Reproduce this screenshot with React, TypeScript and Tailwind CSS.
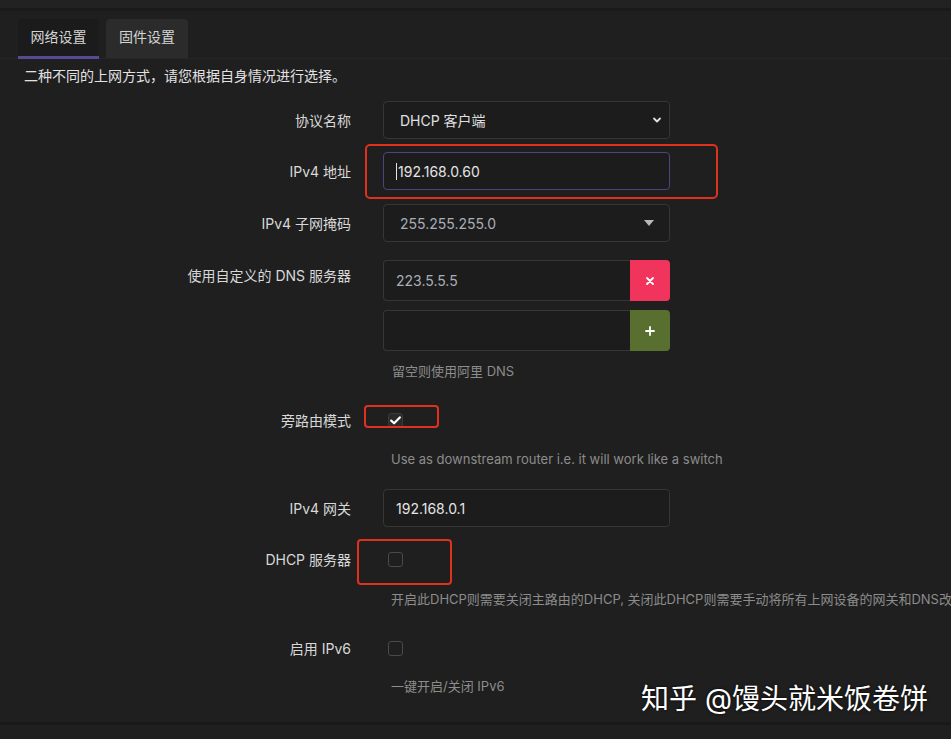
import React from "react";

const font = { fontFamily: '"Inter", "Noto Sans CJK SC", "Noto Sans", sans-serif' };

function Label({ children, className = "" }: { children: React.ReactNode; className?: string }) {
  return (
    <div className={"w-[351px] shrink-0 text-right text-[14px] text-[#d8d8d8] " + className}>{children}</div>
  );
}

function Checkbox({ checked }: { checked?: boolean }) {
  return (
    <div
      className={
        "w-[15px] h-[15px] rounded-[3px] border flex items-center justify-center " +
        (checked ? "border-[#3a3a3a] bg-[#2a2a2a]" : "border-[#4a4a4a] bg-transparent")
      }
    >
      {checked && (
        <svg width="11" height="9" viewBox="0 0 11 9">
          <path d="M1.2 4.6 L4.1 7.3 L9.8 1.4" stroke="#fff" strokeWidth="2.2" fill="none" strokeLinecap="round" strokeLinejoin="round" />
        </svg>
      )}
    </div>
  );
}

function Help({ children, className = "" }: { children: React.ReactNode; className?: string }) {
  return (
    <div className={"flex " + className}>
      <div className="w-[351px] shrink-0" />
      <div className="pl-[40px] text-[13px] text-[#8c8c8c] whitespace-nowrap">{children}</div>
    </div>
  );
}

export default function App() {
  return (
    <div style={font} className="relative w-[951px] h-[739px] overflow-hidden bg-[#1f1f1f]">
      {/* top strip */}
      <div className="h-[8px] bg-[#222222]" />
      <div className="h-[3px] bg-[#1a1a1a]" />
      {/* tabs */}
      <div className="flex gap-[7px] pl-[18px] pt-[8px] border-b border-[#262626]">
        <div className="relative w-[81px] h-[39px] pb-[4px] rounded-t-[4px] bg-[#1b1b1b] flex items-center justify-center text-[14px] text-[#d4d4d4]">
          网络设置
          <div className="absolute left-0 right-0 bottom-[-1px] h-[3px] bg-[#574a92]" />
        </div>
        <div className="w-[82px] h-[39px] pb-[4px] rounded-t-[4px] bg-[#2b2b2b] flex items-center justify-center text-[14px] text-[#d4d4d4]">
          固件设置
        </div>
      </div>
      <div className="pl-[24px] pt-[6px] text-[14px] text-[#e2e2e2]">二种不同的上网方式，请您根据自身情况进行选择。</div>

      {/* form */}
      <div className="flex flex-col mt-[15px]">
        {/* 协议名称 */}
        <div className="flex items-center">
          <Label>协议名称</Label>
          <div className="ml-[32px] w-[287px] h-[38px] rounded-[4px] border border-[#363636] bg-[#1c1c1c] flex items-center justify-between pl-[16px] pr-[6px] text-[14px] text-[#e0e0e0]">
            <span>DHCP 客户端</span>
            <svg width="12" height="12" viewBox="0 0 12 12">
              <path d="M3 4.5 L6 7.5 L9 4.5" stroke="#e0e0e0" strokeWidth="1.8" fill="none" strokeLinecap="round" strokeLinejoin="round" />
            </svg>
          </div>
        </div>

        {/* IPv4 地址 */}
        <div className="flex items-center mt-[13px]">
          <Label>IPv4 地址</Label>
          <div className="relative ml-[32px] w-[287px] h-[38px] rounded-[4px] border border-[#4a4680] bg-[#1c1c1c] flex items-center pl-[12px] text-[14px] text-[#e4e4e4]">
            <span className="w-[1px] h-[17px] bg-[#e4e4e4] mr-[1px]" />
            192.168.0.60
            <div className="absolute left-[-19px] top-[-9px] w-[353px] h-[55px] rounded-[5px] border-[2px] border-[#e0301e]" />
          </div>
        </div>

        {/* IPv4 子网掩码 */}
        <div className="flex items-center mt-[14px]">
          <Label>IPv4 子网掩码</Label>
          <div className="ml-[32px] w-[287px] h-[38px] rounded-[4px] border border-[#363636] bg-[#1c1c1c] flex items-center justify-between pl-[16px] pr-[15px] text-[14px] text-[#a9aeb8]">
            <span>255.255.255.0</span>
            <svg width="10" height="6" viewBox="0 0 10 6">
              <path d="M0 0 L10 0 L5 6 Z" fill="#b8b8b8" />
            </svg>
          </div>
        </div>

        {/* DNS */}
        <div className="flex mt-[18px]">
          <Label className="pt-[5px]">使用自定义的 DNS 服务器</Label>
          <div className="ml-[32px] flex flex-col gap-[9px]">
            <div className="flex w-[287px] h-[41px]">
              <div className="flex-1 rounded-l-[4px] border border-r-0 border-[#363636] bg-[#1c1c1c] flex items-center pl-[12px] text-[14px] text-[#a9aeb8]">
                223.5.5.5
              </div>
              <div className="w-[40px] rounded-r-[4px] bg-[#f0345c] flex items-center justify-center">
                <svg width="10" height="10" viewBox="0 0 10 10">
                  <path d="M2 2 L8 8 M8 2 L2 8" stroke="#fff" strokeWidth="1.8" strokeLinecap="round" />
                </svg>
              </div>
            </div>
            <div className="flex w-[287px] h-[41px]">
              <div className="flex-1 rounded-l-[4px] border border-r-0 border-[#363636] bg-[#1c1c1c]" />
              <div className="w-[40px] rounded-r-[4px] bg-[#586f2f] flex items-center justify-center">
                <svg width="10" height="10" viewBox="0 0 10 10">
                  <path d="M5 1 L5 9 M1 5 L9 5" stroke="#fff" strokeWidth="1.8" strokeLinecap="round" />
                </svg>
              </div>
            </div>
          </div>
        </div>
        <div className="flex mt-[11px]">
          <div className="w-[351px] shrink-0" />
          <div className="pl-[41px] text-[13px] text-[#8c8c8c]">留空则使用阿里 DNS</div>
        </div>

        {/* 旁路由模式 */}
        <div className="flex items-center mt-[28px]">
          <Label>旁路由模式</Label>
          <div className="relative ml-[37px]">
            <Checkbox checked />
            <div className="absolute left-[-24px] top-[-8px] w-[75px] h-[23px] rounded-[4px] border-[2px] border-[#e0301e]" />
          </div>
        </div>
        <Help className="mt-[19px]">Use as downstream router i.e. it will work like a switch</Help>

        {/* IPv4 网关 */}
        <div className="flex items-center mt-[20px]">
          <Label>IPv4 网关</Label>
          <div className="ml-[32px] w-[287px] h-[38px] rounded-[4px] border border-[#363636] bg-[#1c1c1c] flex items-center pl-[12px] text-[14px] text-[#e4e4e4]">
            192.168.0.1
          </div>
        </div>

        {/* DHCP 服务器 */}
        <div className="flex items-center mt-[22px]">
          <Label>DHCP 服务器</Label>
          <div className="relative ml-[37px]">
            <Checkbox />
            <div className="absolute left-[-31px] top-[-13px] w-[95px] h-[46px] rounded-[4px] border-[2px] border-[#e0301e]" />
          </div>
        </div>
        <div className="flex mt-[20px]">
          <div className="w-[351px] shrink-0" />
          <div className="pl-[40px] w-[600px] text-[13px] text-[#8c8c8c] whitespace-nowrap">
            开启此DHCP则需要关闭主路由的DHCP, 关闭此DHCP则需要手动将所有上网设备的网关和DNS改为此旁路由的IP
          </div>
        </div>

        {/* 启用 IPv6 */}
        <div className="flex items-center mt-[28px]">
          <Label>启用 IPv6</Label>
          <div className="ml-[37px]">
            <Checkbox />
          </div>
        </div>
        <Help className="mt-[18px]">一键开启/关闭 IPv6</Help>
      </div>

      {/* bottom line */}
      <div className="absolute left-0 right-0 top-[722px] h-[3px] bg-[#191919]" />

      {/* watermark */}
      <div
        className="absolute left-[641px] top-[678px] text-[28px] text-white whitespace-nowrap"
        style={{ textShadow: "0 0 3px rgba(0,0,0,0.9)" }}
      >
        知乎 @馒头就米饭卷饼
      </div>
    </div>
  );
}
